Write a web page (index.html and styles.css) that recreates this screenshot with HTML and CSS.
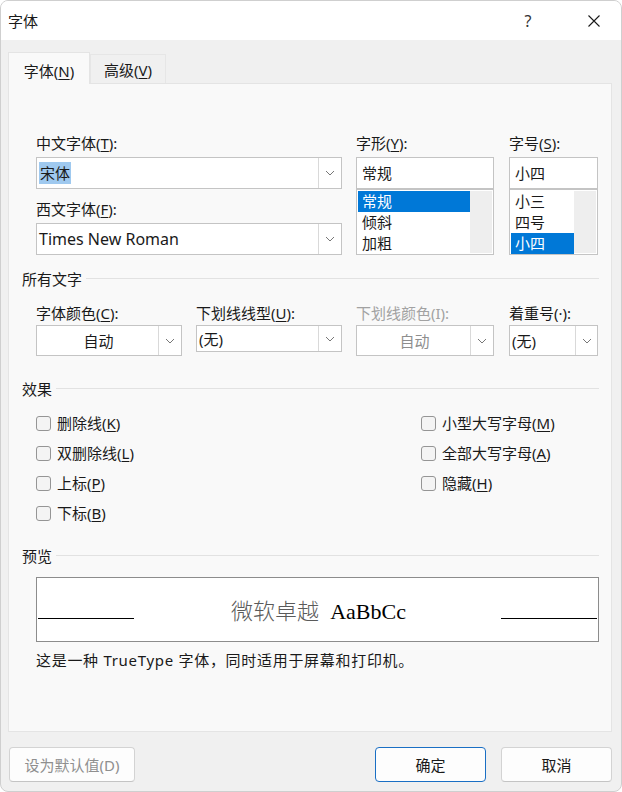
FILE: index.html
```html
<!DOCTYPE html>
<html lang="zh-CN">
<head>
<meta charset="utf-8">
<title>字体</title>
<link rel="stylesheet" href="styles.css">
</head>
<body>
<div class="window">
  <div class="titlebar">
    <span class="title">字体</span>
    <span class="tb-btn help">?</span>
    <span class="tb-btn close"><svg width="14" height="14" viewBox="0 0 14 14"><path d="M1.5 1.5 L12.5 12.5 M12.5 1.5 L1.5 12.5" stroke="#1a1a1a" stroke-width="1.1" fill="none"/></svg></span>
  </div>
  <div class="body">
    <div class="tabs">
      <div class="tab active"><span>字体(<u>N</u>)</span></div>
      <div class="tab"><span>高级(<u>V</u>)</span></div>
    </div>
    <div class="panel">
      <div class="fontrow">
        <div class="col col-w">
          <div class="lbl">中文字体(<u>T</u>):</div>
          <div class="combo tall"><span class="val"><span class="hl">宋体</span></span><span class="dd"><svg width="10" height="6" viewBox="0 0 10 6"><path d="M1 1 L5 5 L9 1" stroke="#777" stroke-width="1" fill="none"/></svg></span></div>
          <div class="lbl lbl2">西文字体(<u>F</u>):</div>
          <div class="combo tall"><span class="val latin">Times New Roman</span><span class="dd"><svg width="10" height="6" viewBox="0 0 10 6"><path d="M1 1 L5 5 L9 1" stroke="#777" stroke-width="1" fill="none"/></svg></span></div>
        </div>
        <div class="col col-s">
          <div class="lbl">字形(<u>Y</u>):</div>
          <div class="field">常规</div>
          <div class="list">
            <div class="items">
              <div class="item on">常规</div>
              <div class="item">倾斜</div>
              <div class="item">加粗</div>
            </div>
            <div class="sb"></div>
          </div>
        </div>
        <div class="col col-z">
          <div class="lbl">字号(<u>S</u>):</div>
          <div class="field">小四</div>
          <div class="list">
            <div class="items">
              <div class="item">小三</div>
              <div class="item">四号</div>
              <div class="item on">小四</div>
            </div>
            <div class="sb"></div>
          </div>
        </div>
      </div>

      <div class="group g1"><span>所有文字</span><i></i></div>
      <div class="row2">
        <div class="col c1">
          <div class="lbl">字体颜色(<u>C</u>):</div>
          <div class="combo"><span class="val center">自动</span><span class="dd"><svg width="10" height="6" viewBox="0 0 10 6"><path d="M1 1 L5 5 L9 1" stroke="#777" stroke-width="1" fill="none"/></svg></span></div>
        </div>
        <div class="col c2">
          <div class="lbl">下划线线型(<u>U</u>):</div>
          <div class="combo short"><span class="val">(无)</span><span class="dd"><svg width="10" height="6" viewBox="0 0 10 6"><path d="M1 1 L5 5 L9 1" stroke="#777" stroke-width="1" fill="none"/></svg></span></div>
        </div>
        <div class="col c3">
          <div class="lbl disabled">下划线颜色(I):</div>
          <div class="combo dis"><span class="val center">自动</span><span class="dd"><svg width="10" height="6" viewBox="0 0 10 6"><path d="M1 1 L5 5 L9 1" stroke="#777" stroke-width="1" fill="none"/></svg></span></div>
        </div>
        <div class="col c4">
          <div class="lbl">着重号(·):</div>
          <div class="combo"><span class="val">(无)</span><span class="dd"><svg width="10" height="6" viewBox="0 0 10 6"><path d="M1 1 L5 5 L9 1" stroke="#777" stroke-width="1" fill="none"/></svg></span></div>
        </div>
      </div>

      <div class="group g2"><span>效果</span><i></i></div>
      <div class="checks">
        <label class="chk"><span class="box"></span><span>删除线(<u>K</u>)</span></label>
        <label class="chk"><span class="box"></span><span>小型大写字母(<u>M</u>)</span></label>
        <label class="chk"><span class="box"></span><span>双删除线(<u>L</u>)</span></label>
        <label class="chk"><span class="box"></span><span>全部大写字母(<u>A</u>)</span></label>
        <label class="chk"><span class="box"></span><span>上标(<u>P</u>)</span></label>
        <label class="chk"><span class="box"></span><span>隐藏(<u>H</u>)</span></label>
        <label class="chk"><span class="box"></span><span>下标(<u>B</u>)</span></label>
      </div>

      <div class="group g3"><span>预览</span><i></i></div>
      <div class="preview">
        <i class="pl"></i>
        <span class="sample"><span class="cn">微软卓越</span>&nbsp; AaBbCc</span>
        <i class="pl"></i>
      </div>
      <p class="caption">这是一种 TrueType 字体，同时适用于屏幕和打印机。</p>
    </div>
    <div class="buttons">
      <button class="btn disabled">设为默认值(D)</button>
      <span class="spacer"></span>
      <button class="btn primary">确定</button>
      <button class="btn">取消</button>
    </div>
  </div>
</div>
</body>
</html>
```

FILE: styles.css
```css
* { box-sizing: border-box; }
html, body { margin: 0; padding: 0; background: #ffffff; }
body {
  font-family: "Noto Sans", "Noto Sans CJK SC", sans-serif;
  font-size: 15px;
  color: #1a1a1a;
}
u { text-decoration: underline; text-underline-offset: 2px; text-decoration-thickness: 1px; }

.window {
  width: 622px;
  height: 792px;
  border: 1px solid #cfcfcf;
  border-radius: 8px;
  overflow: hidden;
  background: #f0f0f0;
  display: flex;
  flex-direction: column;
}

.titlebar {
  height: 39px;
  background: #ffffff;
  display: flex;
  align-items: center;
  padding-left: 7px;
  padding-right: 4px;
  flex: none;
}
.title { flex: 1; line-height: 20px; }
.tb-btn {
  width: 46px;
  height: 39px;
  display: flex;
  align-items: center;
  justify-content: center;
  line-height: 20px;
}
.help { margin-right: 20px; font-size: 16px; color: #333; }

.body {
  flex: 1;
  display: flex;
  flex-direction: column;
  padding: 12px 9px 0 7px;
}

.tabs { display: flex; align-items: flex-end; height: 31px; }
.tab {
  height: 29px;
  width: 76px;
  background: #f0f0f0;
  border: 1px solid #e6e6e6;
  border-bottom: none;
  display: flex;
  align-items: center;
  justify-content: center;
  line-height: 20px;
  padding-top: 1px;
}
.tab.active {
  width: 82px;
  height: 32px;
  background: #f9f9f9;
  border-color: #e4e4e4;
  margin-bottom: -1px;
  position: relative;
  z-index: 1;
  padding-top: 4px;
}

.panel {
  height: 649px;
  background: #f9f9f9;
  border: 1px solid #e4e4e4;
  padding: 49px 12px 0 13px;
}

.lbl { line-height: 20px; height: 20px; margin-bottom: 4px; white-space: nowrap; }
.lbl.disabled { color: #a2a2a2; }
.lbl2 { margin-top: 10px; }

.fontrow { display: flex; gap: 14px; margin-left: 14px; }
.col { display: flex; flex-direction: column; }
.col-w { width: 306px; }
.col-s { width: 138px; margin-right: 1px; }
.col-z { width: 89px; }

.combo {
  height: 31px;
  background: #ffffff;
  border: 1px solid #c4c4c4;
  display: flex;
  align-items: stretch;
}
.combo.tall { height: 32px; }
.combo.short { height: 27px; }
.val {
  flex: 1;
  display: flex;
  align-items: center;
  padding-left: 2px;
  line-height: 20px;
  white-space: nowrap;
}
.val.latin { font-size: 16px; padding-left: 2px; }
.val.center { justify-content: center; }
.hl { background: #9fc9ef; padding: 1px 1px 1px 1px; line-height: 20px; }
.dd {
  width: 23px;
  border-left: 1px solid #d9d9d9;
  display: flex;
  align-items: center;
  justify-content: center;
  flex: none;
}
.combo.dis .val { color: #8e8e8e; }

.field {
  height: 32px;
  background: #fff;
  border: 1px solid #c4c4c4;
  line-height: 30px;
  padding-left: 5px;
}
.list {
  height: 66px;
  background: #fff;
  border: 1px solid #c4c4c4;
  display: flex;
  padding: 1px;
}
.items { flex: 1; display: flex; flex-direction: column; }
.item { height: 21px; line-height: 21px; padding-left: 4px; }
.item.on { background: #0078d7; color: #ffffff; }
.sb { width: 22px; background: #eeeeee; flex: none; }

.group {
  display: flex;
  align-items: center;
  line-height: 20px;
  height: 20px;
}
.group span { flex: none; margin-right: 4px; }
.group i { flex: 1; height: 1px; background: #e2e2e2; margin-top: -1px; }
.g1 { margin-top: 14px; }
.g2 { margin-top: 23px; }
.g3 { margin-top: 18px; }

.row2 { display: flex; margin-left: 14px; margin-top: 14px; }
.row2 .lbl { margin-bottom: 2px; }
.c1 { width: 146px; margin-right: 14px; }
.c2 { width: 146px; margin-right: 14px; }
.c3 { width: 138px; margin-right: 15px; }
.c4 { width: 89px; }
.c4 .dd { width: 22px; }

.checks {
  display: grid;
  grid-template-columns: 385px 1fr;
  grid-auto-rows: 30px;
  margin-left: 14px;
  margin-top: 9px;
}
.chk { display: flex; align-items: center; line-height: 20px; gap: 6px; white-space: nowrap; }
.box {
  width: 15px;
  height: 15px;
  border: 1px solid #959595;
  border-radius: 3px;
  background: #f4f4f4;
  flex: none;
}

.preview {
  margin: 11px 0 0 14px;
  height: 65px;
  background: #ffffff;
  border: 1px solid #8c8c8c;
  display: flex;
  align-items: baseline;
  padding: 16px 1px 0 1px;
}
.pl { width: 96px; height: 1px; background: #000; flex: none; }
.sample {
  flex: 1;
  text-align: center;
  font-family: "Liberation Serif", "Noto Sans CJK SC", serif;
  font-size: 22px;
  line-height: 30px;
  color: #000;
  padding-left: 2px;
}
.sample .cn { font-family: "Noto Sans CJK SC", sans-serif; color: #5a5a5a; font-weight: 300; }

.caption { margin: 8px 0 0 14px; line-height: 20px; letter-spacing: 0.7px; }

.buttons {
  display: flex;
  margin-top: 15px;
  gap: 15px;
  padding-left: 1px;
}
.spacer { flex: 1; }
.btn {
  height: 35px;
  width: 111px;
  background: #fdfdfd;
  border: 1px solid #d3d3d3;
  border-bottom-color: #c4c4c4;
  border-radius: 4px;
  font: inherit;
  color: #1a1a1a;
  padding: 0;
}
.btn.disabled { width: 126px; color: #8f8f8f; }
.btn.primary { border: 1px solid #1a6fc4; }
```
